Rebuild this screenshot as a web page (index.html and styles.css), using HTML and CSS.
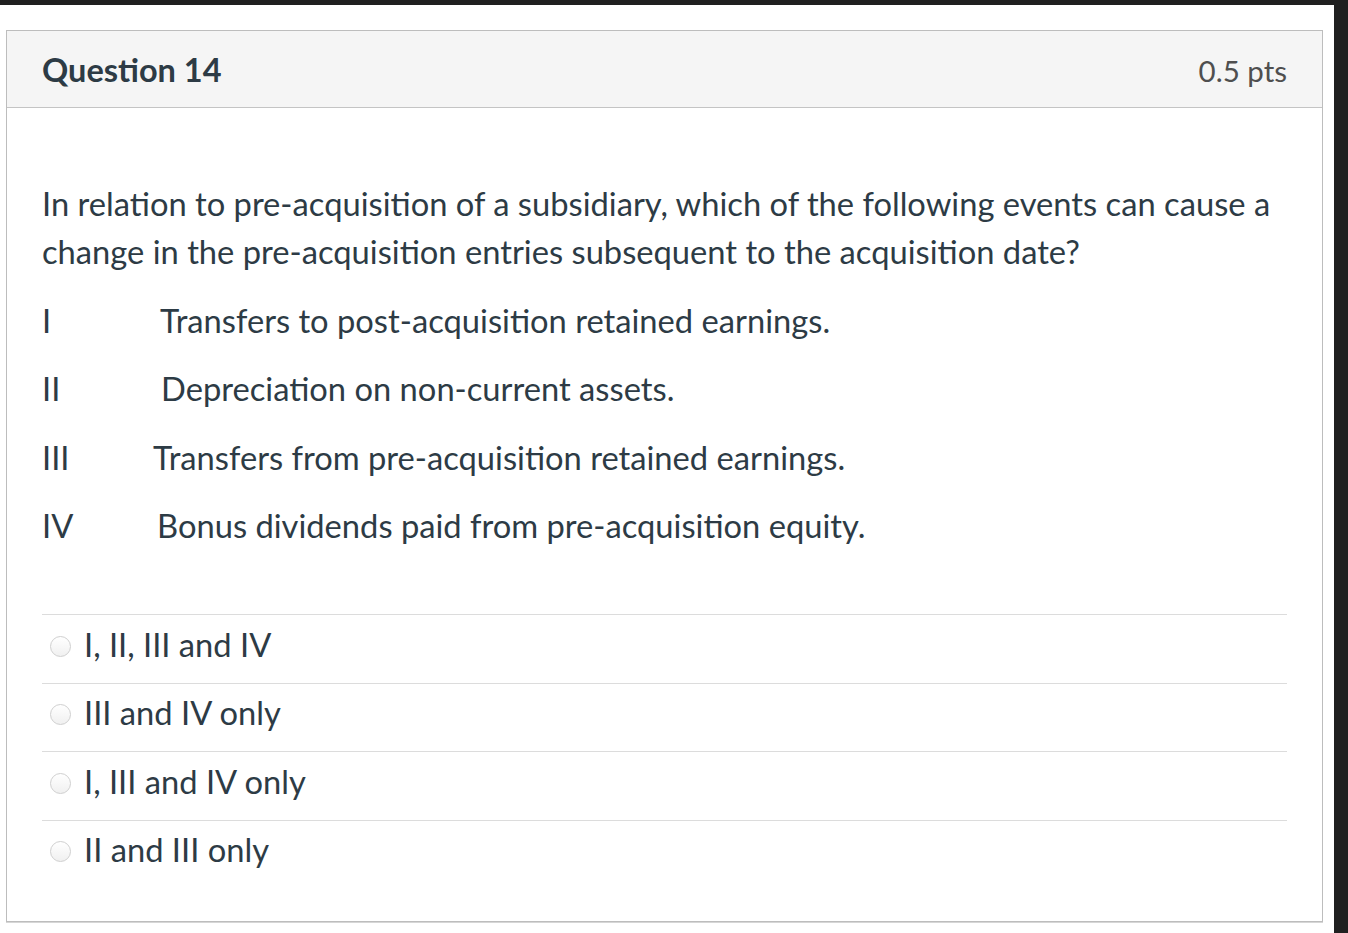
FILE: index.html
```html
<!DOCTYPE html>
<html lang="en">
<head>
<meta charset="utf-8">
<title>Question 14</title>
<link rel="stylesheet" href="styles.css">
</head>
<body>
<div class="topbar"></div>
<div class="screen">
  <main class="main">
    <section class="card">
      <header class="card-header">
        <h2 class="q-title">Question 14</h2>
        <span class="q-points">0.5 pts</span>
      </header>
      <div class="card-body">
        <p class="q-text">In relation to pre-acquisition of a subsidiary, which of the following events can cause a change in the pre-acquisition entries subsequent to the acquisition date?</p>
        <div class="items">
          <div class="item"><span class="num">I</span><span class="desc desc-1">Transfers to post-acquisition retained earnings.</span></div>
          <div class="item"><span class="num">II</span><span class="desc desc-2">Depreciation on non-current assets.</span></div>
          <div class="item"><span class="num">III</span><span class="desc desc-3">Transfers from pre-acquisition retained earnings.</span></div>
          <div class="item"><span class="num">IV</span><span class="desc desc-4">Bonus dividends paid from pre-acquisition equity.</span></div>
        </div>
        <div class="answers">
          <label class="answer"><span class="radio"></span><span class="answer-text">I, II, III and IV</span></label>
          <label class="answer"><span class="radio"></span><span class="answer-text">III and IV only</span></label>
          <label class="answer"><span class="radio"></span><span class="answer-text">I, III and IV only</span></label>
          <label class="answer"><span class="radio"></span><span class="answer-text">II and III only</span></label>
        </div>
      </div>
    </section>
  </main>
  <div class="edge"></div>
</div>
</body>
</html>
```
FILE: styles.css
```css
html, body {
  margin: 0;
  padding: 0;
  background: #ffffff;
  height: 100%;
  overflow: hidden;
}
body {
  font-family: Lato, "Open Sans", "Liberation Sans", sans-serif;
  color: #2d3b45;
}
.topbar {
  height: 5px;
  background: #202020;
}
.screen {
  display: flex;
  height: 928px;
}
.main {
  flex: 1;
  padding: 25px 0 0 6px;
}
.edge {
  width: 14px;
  background: #202020;
}
.card {
  width: 1315px;
  border: 1px solid #bdbdbd;
  box-shadow: 0 1px 0 #d6d6d6;
}
.card-header {
  display: flex;
  justify-content: space-between;
  align-items: center;
  height: 76px;
  padding: 0 35px 0 35px;
  background: #f5f5f5;
  border-bottom: 1px solid #c4c4c4;
}
.q-title {
  margin: 0;
  font-size: 32.5px;
  font-weight: 700;
  color: #2d3b45;
}
.q-points {
  font-size: 29.5px;
  color: #4f4f4f;
  padding-top: 2px;
}
.card-body {
  padding: 72px 35px 33px 35px;
}
.q-text {
  margin: 0;
  font-size: 32.7px;
  line-height: 48px;
}
.items {
  display: flex;
  flex-direction: column;
}
.item {
  display: flex;
  font-size: 32.7px;
  line-height: 48px;
  margin-top: 20.5px;
}
.num {
  width: 0;
  white-space: nowrap;
}
.desc-1 { margin-left: 118px; }
.desc-2 { margin-left: 119px; }
.desc-3 { margin-left: 111px; }
.desc-4 { margin-left: 115px; }
.answers {
  margin-top: 64px;
}
.answer {
  display: flex;
  align-items: center;
  height: 58.5px;
  border-top: 1px solid #dcdcdc;
  font-size: 32.7px;
  padding-bottom: 9px;
}
.radio {
  width: 19px;
  height: 19px;
  border-radius: 50%;
  border: 1px solid #cfcfcf;
  background: linear-gradient(#ffffff, #f0f0f0);
  margin: 4px 13px 0 8px;
  flex: none;
}
```
